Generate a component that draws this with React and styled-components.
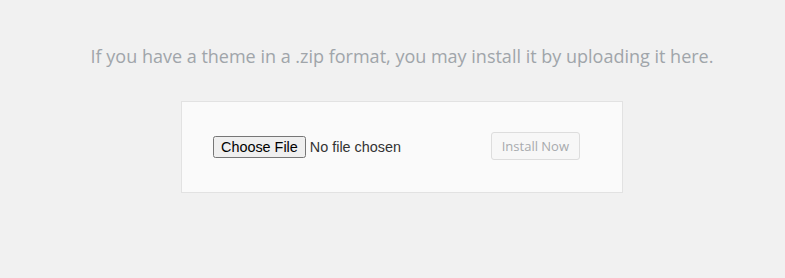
import styled, { createGlobalStyle } from 'styled-components';

const GlobalStyle = createGlobalStyle`
  html, body {
    margin: 0;
    padding: 0;
    background: #f1f1f1;
  }
`;

const Wrap = styled.div`
  min-height: 278px;
  box-sizing: border-box;
  padding: 45px 0 0 19px;
  display: flex;
  flex-direction: column;
  align-items: center;
`;

const Help = styled.p`
  margin: 0 0 33px;
  font-family: 'Open Sans', sans-serif;
  font-size: 18px;
  line-height: 23px;
  color: #a0a5aa;
  text-align: center;
`;

const UploadForm = styled.form`
  width: 442px;
  height: 92px;
  box-sizing: border-box;
  background: #fafafa;
  border: 1px solid #e2e2e2;
  display: flex;
  align-items: center;
  justify-content: space-between;
  padding: 0 42px 0 31px;
`;

const FileInput = styled.input`
  font-family: 'Liberation Sans', Arial, sans-serif;
  font-size: 14.4px;
  color: #333;
  min-width: 0;
`;

const InstallButton = styled.button`
  flex-shrink: 0;
  white-space: nowrap;
  height: 28px;
  margin-bottom: 2px;
  padding: 0 10px;
  font-family: 'Open Sans', sans-serif;
  font-size: 13px;
  color: #a7aaad;
  background: #f7f7f7;
  border: 1px solid #dddddd;
  border-radius: 3px;
  cursor: default;
`;

export default function App() {
  return (
    <>
      <GlobalStyle />
      <Wrap>
        <Help>If you have a theme in a .zip format, you may install it by uploading it here.</Help>
        <UploadForm onSubmit={(e) => e.preventDefault()}>
          <FileInput type="file" name="themezip" />
          <InstallButton type="submit" disabled>Install Now</InstallButton>
        </UploadForm>
      </Wrap>
    </>
  );
}
